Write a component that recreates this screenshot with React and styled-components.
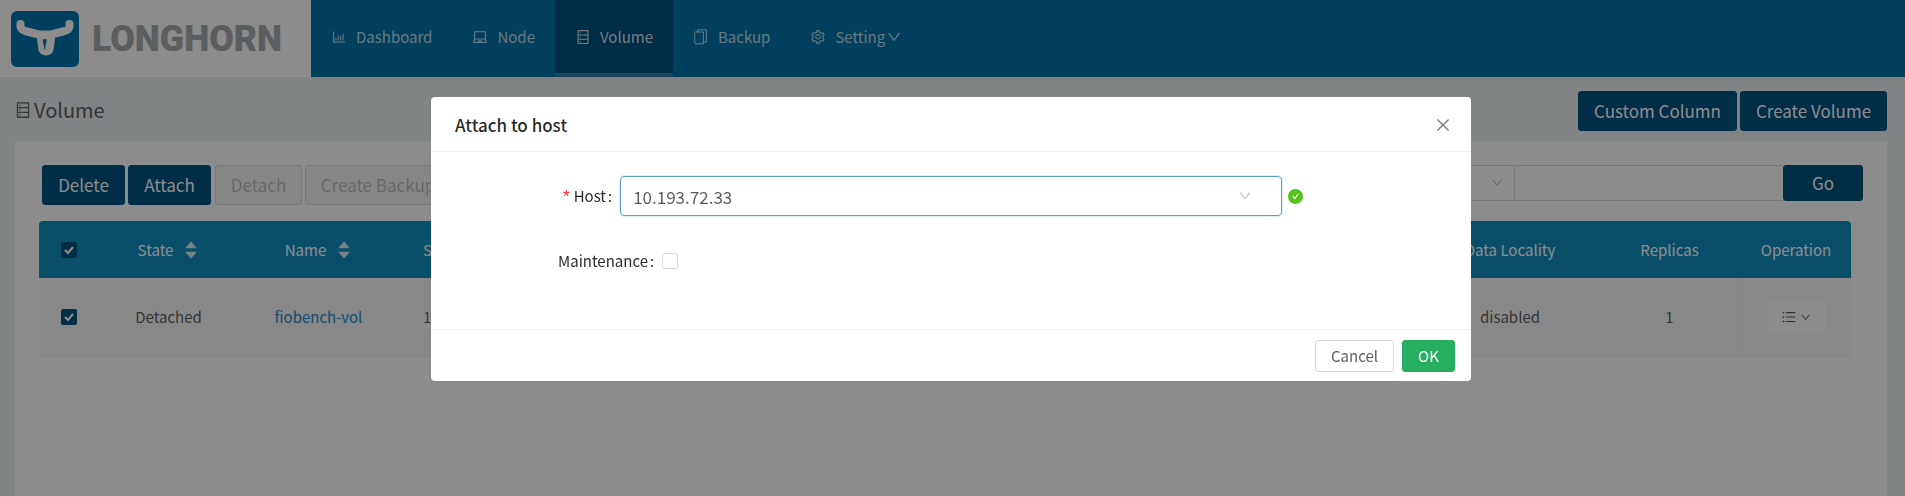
import React from 'react'
import styled, { createGlobalStyle } from 'styled-components'
import {
  AiOutlineBarChart,
  AiOutlineLaptop,
  AiOutlineDatabase,
  AiOutlineSetting,
  AiOutlineDown,
  AiOutlineClose,
  AiFillCheckCircle,
  AiOutlineBars,
  AiFillCaretUp,
  AiFillCaretDown,
} from 'react-icons/ai'

const GlobalStyle = createGlobalStyle`
  html, body {
    margin: 0;
    height: 100%;
    overflow: hidden;
    background: #ecf0f1;
  }
  body, button {
    font-family: "Noto Sans CJK SC", "Noto Sans", sans-serif;
    font-size: 15px;
    color: #7f7f7f;
  }
  * { box-sizing: border-box; }
`

const Page = styled.div`
  width: 1905px;
  height: 496px;
  overflow: hidden;
`

const Header = styled.header`
  display: flex;
  height: 77px;
  background: #0076ac;
`

const Brand = styled.div`
  width: 311px;
  background: #fff;
  display: flex;
  align-items: center;
  padding-left: 11px;
  gap: 13px;
`

const BrandName = styled.span`
  font-family: "Roboto", sans-serif;
  font-weight: 900;
  font-size: 36px;
  line-height: 36px;
  color: #a4abae;
  display: inline-block;
  transform: scaleX(0.99);
  transform-origin: left center;
`

const Nav = styled.nav`
  display: flex;
`

const NavItem = styled.a`
  display: flex;
  align-items: center;
  padding: 0 20px;
  color: ${p => (p.$active ? 'rgba(255,255,255,0.85)' : 'rgba(255,255,255,0.75)')};
  background: ${p => (p.$active ? '#005480' : 'transparent')};
  border-bottom: 4px solid ${p => (p.$active ? '#2f84a8' : 'transparent')};
  font-size: 15px;
  line-height: 22px;
  svg {
    font-size: 16px;
    margin-right: 9px;
  }
`

const Chevron = styled(AiOutlineDown)`
  &&& {
    margin: 0 0 0 1px;
    font-size: 16px;
  }
`

const BackupGlyph = styled.svg`
  &&& {
    margin: 0 11px 0 1px;
  }
`

const Content = styled.main`
  padding: 14px 18px 0 15px;
`

const TitleBar = styled.div`
  display: flex;
  justify-content: space-between;
  align-items: flex-start;
  height: 40px;
  margin-bottom: 10px;
`

const PageTitle = styled.h1`
  margin: 5px 0 0 -1px;
  display: flex;
  align-items: center;
  gap: 2px;
  font-size: 20px;
  font-weight: 400;
  line-height: 28px;
  color: #5f6365;
  svg {
    font-size: 18px;
  }
`

const ButtonRow = styled.div`
  display: flex;
  gap: 3px;
`

const Button = styled.button`
  height: ${p => p.$height || 40}px;
  width: ${p => p.$width}px;
  margin-left: ${p => p.$shift || 0}px;
  padding: 0;
  border-radius: 3px;
  font-size: 17px;
  line-height: 22px;
  white-space: nowrap;
  border: 1px solid ${p => (p.$disabled ? '#d9d9d9' : '#005480')};
  background: ${p => (p.$disabled ? '#f5f5f5' : '#005480')};
  color: ${p => (p.$disabled ? 'rgba(0,0,0,0.25)' : '#fff')};
`

const Panel = styled.section`
  height: 355px;
  background: #fff;
  padding: 24px 24px 0 24px;
`

const Toolbar = styled.div`
  display: flex;
  justify-content: space-between;
  align-items: flex-start;
  height: 40px;
  margin-bottom: 16px;
  padding-left: 3px;
`

const SearchGroup = styled.div`
  display: flex;
  height: 36px;
`

const FilterSelect = styled.div`
  width: 160px;
  border: 1px solid #d9d9d9;
  border-right: 0;
  display: flex;
  align-items: center;
  justify-content: flex-end;
  padding-right: 11px;
  color: #bfbfbf;
  font-size: 12px;
`

const SearchInput = styled.div`
  width: 269px;
  border: 1px solid #d9d9d9;
  border-right: 0;
`

const Table = styled.div`
  width: 1812px;
`

const columns = '60px 139px 161px 1022px 178px 141px 111px'

const HeadRow = styled.div`
  display: grid;
  grid-template-columns: ${columns};
  height: 57px;
  align-items: center;
  background: #1291bf;
  border-radius: 4px 4px 0 0;
  color: #fff;
`

const BodyRow = styled.div`
  display: grid;
  grid-template-columns: ${columns};
  height: 79px;
  align-items: center;
  background: #f8f8f8;
  border-bottom: 1px solid #f2f2f2;
  color: rgba(0,0,0,0.65);
`

const Cell = styled.div`
  display: flex;
  align-items: center;
  justify-content: ${p => p.$align || 'center'};
  padding-left: ${p => p.$indent || 0}px;
  gap: 10px;
  height: 100%;
  line-height: 22px;
  white-space: nowrap;
`

const OperationCell = styled(Cell)`
  border-left: 1px solid rgba(0,0,0,0.03);
`

const CheckBox = styled.span`
  width: 16px;
  height: 16px;
  border-radius: 2px;
  background: #005480;
  display: flex;
  align-items: center;
  justify-content: center;
`

const NameLink = styled.a`
  color: #2a8cd0;
`

const Sorter = styled.span`
  display: inline-flex;
  flex-direction: column;
  color: rgba(255,255,255,0.85);
  font-size: 16px;
  line-height: 0;
  svg {
    display: block;
    margin: -3px 0;
  }
`

const OperationButton = styled.div`
  width: 59px;
  height: 32px;
  background: #fff;
  border-radius: 3px;
  display: flex;
  align-items: center;
  justify-content: center;
  gap: 3px;
  color: rgba(0,0,0,0.65);
`

const Overlay = styled.div`
  position: fixed;
  inset: 0;
  background: rgba(0,0,0,0.45);
  padding: 97px 0 0 431px;
`

const Modal = styled.div`
  width: 1040px;
  height: 284px;
  background: #fff;
  border-radius: 4px;
  display: flex;
  flex-direction: column;
  color: rgba(0,0,0,0.85);
`

const ModalHeader = styled.div`
  height: 55px;
  display: flex;
  align-items: center;
  justify-content: space-between;
  padding: 2px 19px 0 24px;
  border-bottom: 1px solid #f0f0f0;
`

const ModalTitle = styled.div`
  font-size: 17px;
  font-weight: 500;
  line-height: 22px;
  color: rgba(0,0,0,0.85);
`

const CloseIcon = styled(AiOutlineClose)`
  font-size: 18px;
  color: rgba(0,0,0,0.5);
`

const ModalBody = styled.div`
  flex: 1;
  padding-top: 24px;
  display: flex;
  flex-direction: column;
  gap: 25px;
`

const FormRow = styled.div`
  display: flex;
  align-items: center;
  height: 40px;
  padding-left: ${p => p.$indent}px;
`

const FormLabel = styled.label`
  font-size: 15px;
  line-height: 22px;
  color: rgba(0,0,0,0.85);
`

const Colon = styled.span`
  margin: 0 8px 0 2px;
`

const Required = styled.span`
  color: #f5222d;
  margin-right: 4px;
  font-size: 17px;
  font-family: "Liberation Sans", sans-serif;
`

const Select = styled.div`
  width: 662px;
  height: 40px;
  border: 1px solid #5b9dc4;
  border-radius: 4px;
  box-shadow: 0 0 0 1px rgba(0,118,172,0.12);
  display: flex;
  align-items: center;
  justify-content: space-between;
  padding: 0 29px 0 12px;
  font-size: 17px;
  color: rgba(0,0,0,0.65);
  svg {
    font-size: 14px;
    color: rgba(0,0,0,0.25);
  }
`

const Feedback = styled(AiFillCheckCircle)`
  color: #52c41a;
  font-size: 17px;
  margin-left: 5px;
`

const EmptyCheck = styled.span`
  width: 16px;
  height: 16px;
  border: 1px solid #d9d9d9;
  border-radius: 2px;
`

const ModalFooter = styled.div`
  height: 52px;
  border-top: 1px solid #f0f0f0;
  display: flex;
  justify-content: flex-end;
  align-items: center;
  gap: 8px;
  padding: 0 16px 0 0;
`

const FooterButton = styled.button`
  height: 32px;
  width: ${p => p.$width}px;
  padding: 0;
  border-radius: 3px;
  font-size: 15px;
  border: 1px solid ${p => (p.$primary ? '#27ae60' : '#d9d9d9')};
  background: ${p => (p.$primary ? '#27ae60' : '#fff')};
  color: ${p => (p.$primary ? '#fff' : 'rgba(0,0,0,0.65)')};
`

const Logo = () => (
  <svg width="68" height="56" viewBox="0 0 68 56">
    <rect width="68" height="56" rx="6" fill="#0076ac" />
    <path
      d="M9.5 13 L9.5 16 Q10.5 19.5 16 20.5 L28 23.5 L40 23.5 L52 20.5 Q57.5 19.5 58.5 16 L58.5 13"
      fill="none"
      stroke="#fff"
      strokeWidth="8"
      strokeLinecap="round"
      strokeLinejoin="round"
    />
    <path d="M27 24 L43 24 L41 39 Q40 43 35 43 Q30 43 29 39 Z" fill="#fff" stroke="#fff" strokeWidth="3" strokeLinejoin="round" />
    <path d="M31.7 28.3 L35.7 28.3 L33.7 39.7 Z" fill="#0076ac" />
  </svg>
)

const BackupIcon = () => (
  <BackupGlyph width="13" height="16" viewBox="0 0 13 16" fill="none" stroke="currentColor">
    <path d="M3.5 3 V0.8 H12.4 V13 H9.5" />
    <path d="M1.3 3 H9.4 V14.8 H2 Q0.7 14.8 0.7 13.6 V3.6 Q0.7 3 1.3 3 Z" />
  </BackupGlyph>
)

const Check = () => (
  <CheckBox>
    <svg width="10" height="8" viewBox="0 0 10 8">
      <path d="M1 4 L4 7 L9 1" fill="none" stroke="#fff" strokeWidth="2" />
    </svg>
  </CheckBox>
)

const SortIcon = () => (
  <Sorter>
    <AiFillCaretUp />
    <AiFillCaretDown />
  </Sorter>
)

const App = () => (
  <Page>
    <GlobalStyle />
    <Header>
      <Brand>
        <Logo />
        <BrandName>LONGHORN</BrandName>
      </Brand>
      <Nav>
        <NavItem><AiOutlineBarChart />Dashboard</NavItem>
        <NavItem><AiOutlineLaptop />Node</NavItem>
        <NavItem $active><AiOutlineDatabase />Volume</NavItem>
        <NavItem><BackupIcon />Backup</NavItem>
        <NavItem><AiOutlineSetting />Setting<Chevron /></NavItem>
      </Nav>
    </Header>
    <Content>
      <TitleBar>
        <PageTitle><AiOutlineDatabase />Volume</PageTitle>
        <ButtonRow>
          <Button $width={159}>Custom Column</Button>
          <Button $width={147}>Create Volume</Button>
        </ButtonRow>
      </TitleBar>
      <Panel>
        <Toolbar>
          <ButtonRow>
            <Button $width={83}>Delete</Button>
            <Button $width={83}>Attach</Button>
            <Button $width={87} $shift={1} $disabled>Detach</Button>
            <Button $width={146} $disabled>Create Backup</Button>
          </ButtonRow>
          <SearchGroup>
            <FilterSelect><AiOutlineDown /></FilterSelect>
            <SearchInput />
            <Button $width={80} $height={36}>Go</Button>
          </SearchGroup>
        </Toolbar>
        <Table>
          <HeadRow>
            <Cell><Check /></Cell>
            <Cell>State<SortIcon /></Cell>
            <Cell>Name<SortIcon /></Cell>
            <Cell $align="flex-start" $indent={24}>Size</Cell>
            <Cell>Data Locality</Cell>
            <Cell>Replicas</Cell>
            <OperationCell>Operation</OperationCell>
          </HeadRow>
          <BodyRow>
            <Cell><Check /></Cell>
            <Cell>Detached</Cell>
            <Cell><NameLink>fiobench-vol</NameLink></Cell>
            <Cell $align="flex-start" $indent={24}>10 Gi</Cell>
            <Cell>disabled</Cell>
            <Cell>1</Cell>
            <OperationCell>
              <OperationButton><AiOutlineBars size={16} /><AiOutlineDown size={11} /></OperationButton>
            </OperationCell>
          </BodyRow>
        </Table>
      </Panel>
    </Content>
    <Overlay>
      <Modal>
        <ModalHeader>
          <ModalTitle>Attach to host</ModalTitle>
          <CloseIcon />
        </ModalHeader>
        <ModalBody>
          <FormRow $indent={132}>
            <FormLabel><Required>*</Required>Host<Colon>:</Colon></FormLabel>
            <Select>10.193.72.33<AiOutlineDown /></Select>
            <Feedback />
          </FormRow>
          <FormRow $indent={127}>
            <FormLabel>Maintenance<Colon>:</Colon></FormLabel>
            <EmptyCheck />
          </FormRow>
        </ModalBody>
        <ModalFooter>
          <FooterButton $width={79}>Cancel</FooterButton>
          <FooterButton $width={53} $primary>OK</FooterButton>
        </ModalFooter>
      </Modal>
    </Overlay>
  </Page>
)

export default App
